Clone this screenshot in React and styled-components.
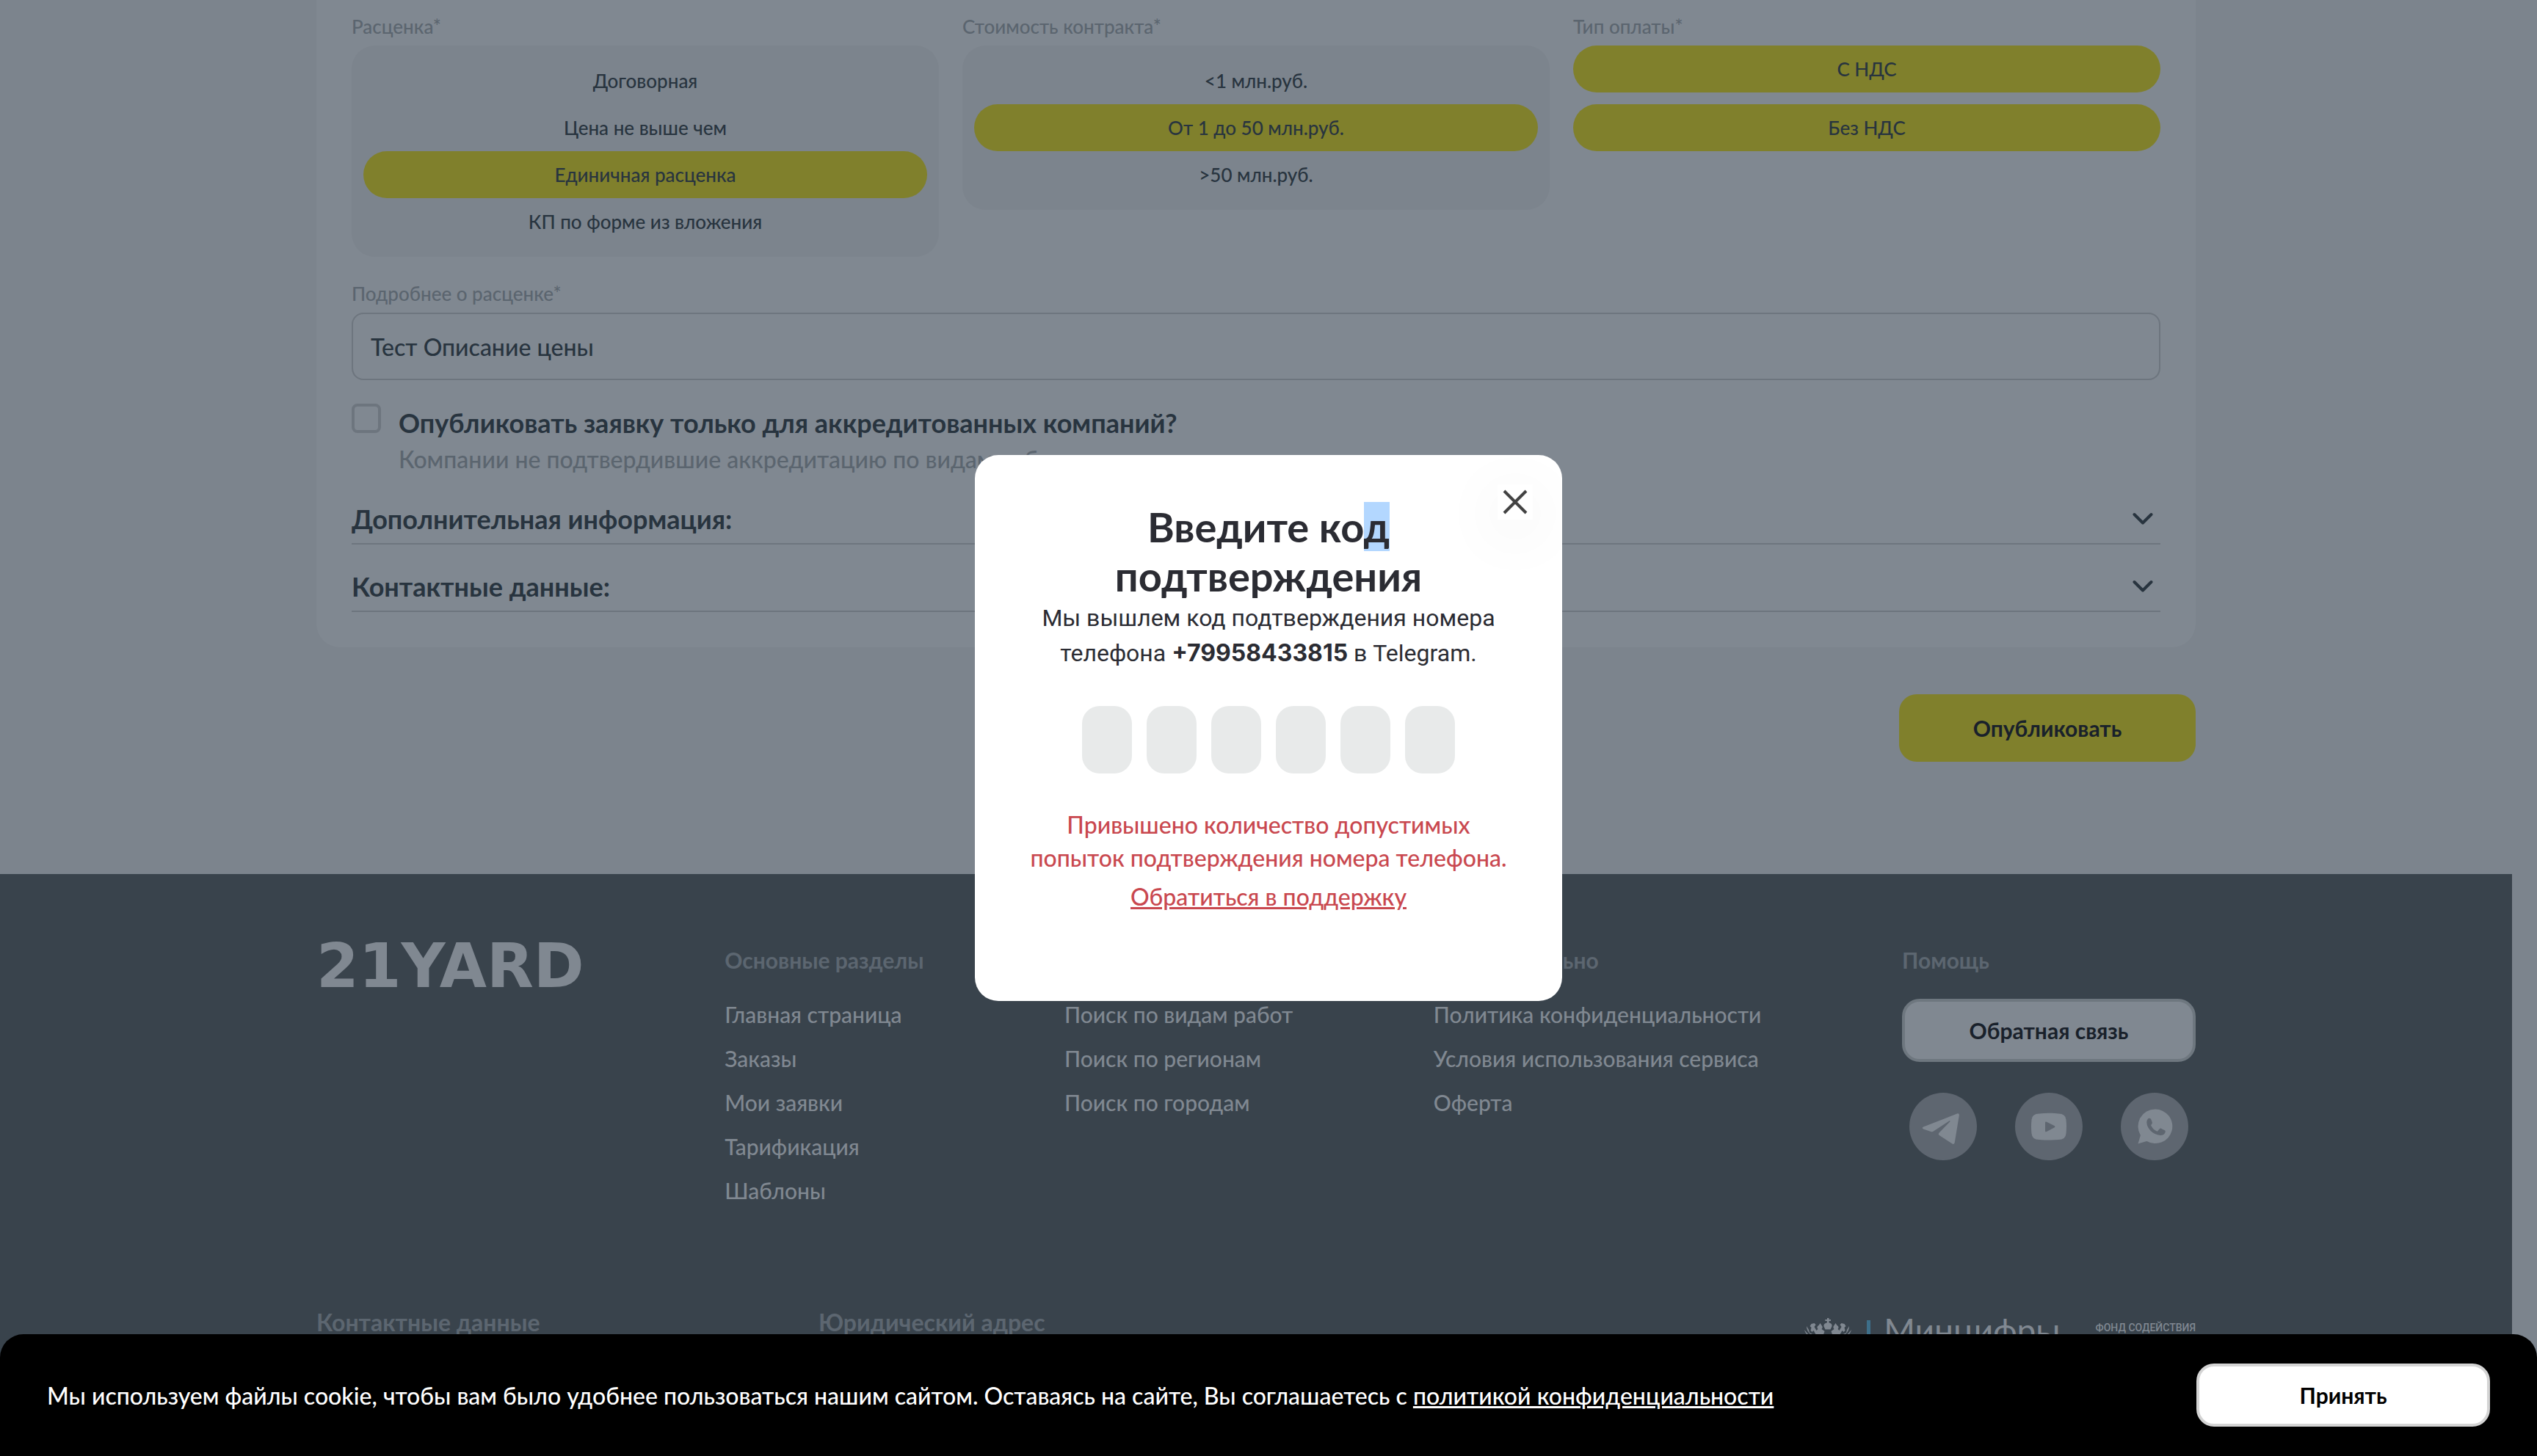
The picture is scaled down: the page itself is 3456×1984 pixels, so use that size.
import React, { useState } from 'react';
import styled, { createGlobalStyle } from 'styled-components';

const color = {
  page: '#7c848d',
  card: '#808891',
  accent: '#80802c',
  text: '#28343f',
  strong: '#19212b',
  label: '#5b656f',
  line: '#6d757e',
  footer: '#39434c',
  footerHead: '#5c6670',
  light: '#808891',
};

const GlobalStyle = createGlobalStyle`
  *, *::before, *::after { box-sizing: border-box; }
  body {
    margin: 0;
    overflow: hidden;
    background: ${color.page};
    font-family: Lato, "Noto Sans", sans-serif;
    font-size: 32px;
    color: ${color.text};
  }
  button, input { font-family: inherit; margin: 0; }
  h2, h3, p, ul { margin: 0; padding: 0; }
`;

const Page = styled.div`
  height: 100vh;
  overflow: hidden;
  padding-right: 34px;
  background: ${color.page};
`;

const Container = styled.div`
  width: 100%;
  max-width: 2560px;
  margin: 0 auto;
`;

const FormCard = styled.section`
  display: flex;
  flex-direction: column;
  gap: 32px;
  padding: 18px 48px 48px;
  background: ${color.card};
  border-radius: 0 0 32px 32px;
`;

const Columns = styled.div`
  display: grid;
  grid-template-columns: repeat(3, 1fr);
  gap: 32px;
  align-items: start;
`;

const Field = styled.div`
  display: flex;
  flex-direction: column;
  gap: 8px;
`;

const FieldLabel = styled.label`
  font-size: 26px;
  font-weight: 500;
  line-height: 36px;
  color: ${color.label};
`;

const OptionBox = styled.div`
  display: flex;
  flex-direction: column;
  gap: ${(p) => (p.$separate ? '16px' : '0')};
  padding: ${(p) => (p.$separate ? '0' : '16px')};
  border-radius: 32px;
  background: ${(p) => (p.$separate ? 'transparent' : color.page)};
`;

const Option = styled.button`
  height: 64px;
  padding: 0 32px;
  border: 0;
  border-radius: 32px;
  background: ${(p) => (p.$active ? color.accent : 'transparent')};
  color: ${color.text};
  font-size: 26px;
  font-weight: 500;
  cursor: pointer;
`;

const TextInput = styled.input`
  width: 100%;
  height: 92px;
  padding: 0 24px;
  border: 2px solid ${color.line};
  border-radius: 16px;
  background: transparent;
  color: ${color.text};
  font-size: 32px;
  font-weight: 500;
  outline: none;
`;

const CheckRow = styled.div`
  display: flex;
  gap: 24px;
`;

const CheckBox = styled.input`
  appearance: none;
  flex: none;
  width: 40px;
  height: 40px;
  border: 4px solid ${color.line};
  border-radius: 8px;
`;

const CheckText = styled.label`
  display: flex;
  flex-direction: column;
`;

const CheckTitle = styled.span`
  font-size: 36px;
  font-weight: 700;
  line-height: 52px;
`;

const CheckHint = styled.span`
  font-weight: 500;
  line-height: 48px;
  color: ${color.label};
`;

const Options = styled.div`
  display: flex;
  flex-direction: column;
`;

const AccordionHeader = styled.button`
  display: flex;
  align-items: center;
  justify-content: space-between;
  width: 100%;
  padding: 32px 10px 8px 0;
  border: 0;
  border-bottom: 2px solid ${color.line};
  background: transparent;
  color: ${color.text};
  font-size: 36px;
  font-weight: 700;
  line-height: 50px;
  cursor: pointer;
`;

const Actions = styled.div`
  display: flex;
  justify-content: flex-end;
  padding: 64px 0 153px;
`;

const PublishButton = styled.button`
  width: 404px;
  height: 92px;
  border: 0;
  border-radius: 24px;
  background: ${color.accent};
  color: ${color.strong};
  font-size: 30px;
  font-weight: 700;
`;

const Footer = styled.footer`
  padding: 96px 0 240px;
  background: ${color.footer};
`;

const FooterTop = styled.div`
  display: flex;
  justify-content: space-between;
  align-items: flex-start;
`;

const Logo = styled.a`
  font-family: "DejaVu Sans", sans-serif;
  font-size: 83px;
  font-weight: 700;
  line-height: 60px;
  color: ${color.light};
  text-decoration: none;
`;

const FooterColumn = styled.div`
  display: flex;
  flex-direction: column;
  gap: 32px;
`;

const FooterTitle = styled.h3`
  font-size: ${(p) => (p.$large ? '32px' : '30px')};
  font-weight: 700;
  line-height: 42px;
  color: ${color.footerHead};
`;

const LinkList = styled.ul`
  display: flex;
  flex-direction: column;
  gap: 18px;
  list-style: none;
`;

const FooterLink = styled.a`
  display: block;
  font-size: 30px;
  font-weight: 500;
  line-height: 42px;
  color: ${color.light};
  text-decoration: none;
`;

const OutlineButton = styled.button`
  width: 400px;
  height: 86px;
  flex: none;
  border: 4px solid ${(p) => (p.$bright ? '#d4d4d4' : '#6e777f')};
  border-radius: 24px;
  background: ${(p) => (p.$bright ? '#ffffff' : color.light)};
  color: ${(p) => (p.$bright ? '#000000' : color.strong)};
  font-size: 30px;
  font-weight: 700;
`;

const Socials = styled.div`
  display: flex;
  justify-content: space-between;
  padding: 10px 10px 0;
`;

const SocialLink = styled.a`
  display: block;
  height: 92px;
`;

const FooterBottom = styled.div`
  display: flex;
  align-items: flex-start;
  padding-top: 138px;
`;

const BottomCell = styled.div`
  width: 684px;
`;

const Partners = styled.div`
  display: flex;
  align-items: flex-start;
  gap: 48px;
  margin-left: auto;
`;

const Ministry = styled.div`
  display: flex;
  align-items: flex-start;
  gap: 16px;
  color: ${color.light};
  font-size: 46px;
  line-height: 64px;
`;

const EmblemBox = styled.span`
  display: flex;
  padding-top: 15px;
`;

const Fund = styled.span`
  font-family: Roboto, sans-serif;
  font-size: 14px;
  font-weight: 500;
  line-height: 56px;
  color: ${color.light};
`;

const Overlay = styled.div`
  position: fixed;
  inset: 0;
  z-index: 10;
  display: flex;
  align-items: center;
  justify-content: center;
`;

const Dialog = styled.div`
  position: relative;
  width: 800px;
  padding: 64px 64px 119px;
  border-radius: 32px;
  overflow: hidden;
  background: #ffffff;
  color: #2b2c33;
  text-align: center;
`;

const CloseButton = styled.button`
  position: absolute;
  top: 40px;
  right: 40px;
  width: 48px;
  height: 48px;
  padding: 0;
  border: 0;
  background: #ffffff;
  box-shadow: 0 16px 80px 16px rgba(0, 0, 0, 0.03);
  cursor: pointer;
`;

const DialogTitle = styled.h2`
  font-size: 56px;
  font-weight: 700;
  line-height: 67px;
`;

const Selected = styled.span`
  background: #b3d7ff;
`;

const DialogText = styled.p`
  font-family: Roboto, sans-serif;
  font-size: 32px;
  line-height: 48px;
`;

const Phone = styled.b`
  font-family: Inter, sans-serif;
  font-weight: 700;
  line-height: 1;
`;

const CodeRow = styled.div`
  display: flex;
  justify-content: center;
  gap: 20px;
  margin: 48px 0 47px;
`;

const CodeInput = styled.input`
  width: 68px;
  height: 92px;
  padding: 0;
  border: 0;
  border-radius: 24px;
  background: #e8eaea;
  text-align: center;
  font-size: 36px;
  outline: none;
`;

const ErrorText = styled.p`
  margin-bottom: 8px;
  color: #c9484f;
  font-weight: 500;
  line-height: 45px;
`;

const SupportLink = styled.a`
  color: #c9484f;
  font-weight: 500;
  line-height: 46px;
  display: block;
  text-decoration: underline;
`;

const CookieBar = styled.div`
  position: fixed;
  left: 0;
  right: 0;
  bottom: 0;
  z-index: 20;
  display: flex;
  align-items: center;
  justify-content: space-between;
  padding: 40px 64px;
  border-radius: 32px 32px 0 0;
  background: #000000;
  color: #ffffff;
  font-weight: 500;
`;

const PolicyLink = styled.a`
  color: inherit;
`;

const Chevron = () => (
  <svg width="28" height="18" viewBox="0 0 28 18" fill="none" aria-hidden="true">
    <path d="M2.5 3 14 14.5 25.5 3" stroke={color.text} strokeWidth="4" strokeLinecap="round" strokeLinejoin="round" />
  </svg>
);

const TelegramIcon = () => (
  <svg width="92" height="92" viewBox="0 0 94 94" aria-hidden="true">
    <circle cx="47" cy="47" r="47" fill="#5e6670" />
    <path
      fill={color.light}
      d="M66.5 29.2 19.5 47.6c-1.800.7-1.800 2.300 0 2.900l10.500 3.600c1.600.5 2.600.3 3.900-.6l21.500-14.200c1.200-.8 1.800.2 1 1L41.500 55.600c-1.300 1.300-1.200 2.500.2 3.600l17.600 11.600c1.900 1.200 3.300.6 3.800-1.600l6.200-37.600c.3-2.100-.9-3.100-2.800-2.400Z"
    />
  </svg>
);

const YoutubeIcon = () => (
  <svg width="92" height="92" viewBox="0 0 92 92" aria-hidden="true">
    <circle cx="46" cy="46" r="46" fill="#5e6670" />
    <path
      fill={color.light}
      fillRule="evenodd"
      d="M33 28.500Q46 27 59 28.500Q69 28.500 69.500 37Q70.500 46 69.500 55.500Q69 64 59 64Q46 65 33 64Q23 64 22.500 55.500Q21.500 46 22.500 37Q23 28.500 33 28.500ZM41 41v11q0 2 2 1l10.500-5.500q1.800-1.200 0-2.400L43 39.800q-2-.8-2 1.200Z"
    />
  </svg>
);

const WhatsappIcon = () => (
  <svg width="92" height="92" viewBox="0 0 92 92" aria-hidden="true">
    <circle cx="46" cy="46" r="46" fill="#5e6670" />
    <path fill={color.light} d="M47 22.500a23.300 23.300 0 1 1-11.600 43.500L23.500 69.500l3.400-11.600A23.300 23.300 0 0 1 47 22.500Z" />
    <path
      fill="#5e6670"
      d="M38.200 34.800c1.700-.5 2.600.2 3.200 1.800l1.300 3.500c.5 1.400-.1 2.300-1.700 4.200 1.900 4.200 4.700 6.800 8.700 8.400l2.900-3.300c.9-1 1.600-1.100 2.800-.5l4.100 2.100c1.200.6 1.500 1.300 1.200 2.600-.8 3.200-3.600 4.700-7 4.500C43.600 57 35.500 48.500 35.300 40.500c0-2.700 1.100-5 2.900-5.700Z"
    />
  </svg>
);

const Emblem = () => (
  <svg width="92" height="72" viewBox="0 0 92 72" fill={color.light} aria-hidden="true">
    <path d="M31 0h2.500v2H36v2h-2.500v2.500c3.500.3 5 3 3.500 6l-1.500 3h-7L27 12.500c-1.500-3 .3-5.700 3.800-6V4h-2.500V2H31Z" />
    <path d="M19.500 10 21.500 7l2 3c1.500 1.500 1.500 3.500 0 5l4 3-2 6h-9l-4-7-2 2-2-2 1-4-2-2 2-3 4-1 2 2-2 3 3 5 2-2c-1.500-1.500-1.500-3.500.7-5Z" />
    <path d="M44.500 10 42.500 7l-2 3c-1.500 1.500-1.500 3.500 0 5l-4 3 2 6h9l4-7 2 2 2-2-1-4 2-2-2-3-4-1-2 2 2 3-3 5-2-2c1.500-1.500 1.500-3.500-.7-5Z" />
    <path d="M3 11c0 5 2 8 5 11l12 4 12-3 12 3 12-4c3-3 5-6 5-11l-3 5-1 4-4 2-21 6-21-6-4-2-1-4Z" />
    <path d="M0 16c1 4 3 7 7 9l6 19 19 26 19-26 6-19c4-2 6-5 7-9l-5 6-27 6-27-6Z" />
    <path fill="#3d6f8a" d="M85 3h5v60h-5Z" />
  </svg>
);

const CloseIcon = () => (
  <svg width="48" height="48" viewBox="0 0 48 48" aria-hidden="true">
    <path d="m9 9 30 30M39 9 9 39" stroke="#434343" strokeWidth="4" fill="none" />
  </svg>
);

const priceOptions = ['Договорная', 'Цена не выше чем', 'Единичная расценка', 'КП по форме из вложения'];
const costOptions = ['<1 млн.руб.', 'От 1 до 50 млн.руб.', '>50 млн.руб.'];
const taxOptions = ['С НДС', 'Без НДС'];

const footerSections = [
  { title: 'Основные разделы', links: ['Главная страница', 'Заказы', 'Мои заявки', 'Тарификация', 'Шаблоны'] },
  { title: 'Поиск', links: ['Поиск по видам работ', 'Поиск по регионам', 'Поиск по городам'] },
  { title: 'Дополнительно', links: ['Политика конфиденциальности', 'Условия использования сервиса', 'Оферта'] },
];

function OptionField({ label, options, active, onPick, separate }) {
  return (
    <Field role="group" aria-label={label}>
      <FieldLabel as="span">{label}</FieldLabel>
      <OptionBox $separate={separate}>
        {options.map((name) => (
          <Option key={name} type="button" $active={active.includes(name)} onClick={() => onPick(name)}>
            {name}
          </Option>
        ))}
      </OptionBox>
    </Field>
  );
}

export default function App() {
  const [price, setPrice] = useState('Единичная расценка');
  const [cost, setCost] = useState('От 1 до 50 млн.руб.');
  const [tax, setTax] = useState(taxOptions);
  const toggleTax = (name) =>
    setTax((list) => (list.includes(name) ? list.filter((item) => item !== name) : [...list, name]));

  return (
    <>
      <GlobalStyle />
      <Page>
        <Container as="main">
          <FormCard>
            <Columns>
              <OptionField label="Расценка*" options={priceOptions} active={[price]} onPick={setPrice} />
              <OptionField label="Стоимость контракта*" options={costOptions} active={[cost]} onPick={setCost} />
              <OptionField label="Тип оплаты*" options={taxOptions} active={tax} onPick={toggleTax} separate />
            </Columns>
            <Field>
              <FieldLabel htmlFor="price-details">Подробнее о расценке*</FieldLabel>
              <TextInput id="price-details" type="text" defaultValue="Тест Описание цены" />
            </Field>
            <Options>
              <CheckRow>
                <CheckBox id="accredited" type="checkbox" />
                <CheckText htmlFor="accredited">
                  <CheckTitle>Опубликовать заявку только для аккредитованных компаний?</CheckTitle>
                  <CheckHint>Компании не подтвердившие аккредитацию по видам работ не увидят заявку</CheckHint>
                </CheckText>
              </CheckRow>
              <AccordionHeader type="button">
                Дополнительная информация:
                <Chevron />
              </AccordionHeader>
              <AccordionHeader type="button">
                Контактные данные:
                <Chevron />
              </AccordionHeader>
            </Options>
          </FormCard>
          <Actions>
            <PublishButton type="button">Опубликовать</PublishButton>
          </Actions>
        </Container>
        <Footer>
          <Container>
            <FooterTop>
              <Logo href="#">21YARD</Logo>
              {footerSections.map((section) => (
                <FooterColumn key={section.title}>
                  <FooterTitle>{section.title}</FooterTitle>
                  <LinkList>
                    {section.links.map((link) => (
                      <li key={link}>
                        <FooterLink href="#">{link}</FooterLink>
                      </li>
                    ))}
                  </LinkList>
                </FooterColumn>
              ))}
              <FooterColumn>
                <FooterTitle>Помощь</FooterTitle>
                <OutlineButton type="button">Обратная связь</OutlineButton>
                <Socials>
                  <SocialLink href="#" aria-label="Telegram"><TelegramIcon /></SocialLink>
                  <SocialLink href="#" aria-label="YouTube"><YoutubeIcon /></SocialLink>
                  <SocialLink href="#" aria-label="WhatsApp"><WhatsappIcon /></SocialLink>
                </Socials>
              </FooterColumn>
            </FooterTop>
            <FooterBottom>
              <BottomCell>
                <FooterTitle $large>Контактные данные</FooterTitle>
              </BottomCell>
              <BottomCell>
                <FooterTitle $large>Юридический адрес</FooterTitle>
              </BottomCell>
              <Partners>
                <Ministry>
                  <EmblemBox><Emblem /></EmblemBox>
                  Минцифры
                </Ministry>
                <Fund>ФОНД СОДЕЙСТВИЯ</Fund>
              </Partners>
            </FooterBottom>
          </Container>
        </Footer>
      </Page>

      <Overlay>
        <Dialog role="dialog" aria-modal="true" aria-labelledby="dialog-title">
          <CloseButton type="button" aria-label="Закрыть"><CloseIcon /></CloseButton>
          <DialogTitle id="dialog-title">
            Введите ко<Selected>д</Selected> подтверждения
          </DialogTitle>
          <DialogText>
            Мы вышлем код подтверждения номера телефона <Phone>+79958433815</Phone> в Telegram.
          </DialogText>
          <CodeRow>
            {[1, 2, 3, 4, 5, 6].map((n) => (
              <CodeInput key={n} type="text" inputMode="numeric" maxLength={1} aria-label={`Цифра ${n}`} />
            ))}
          </CodeRow>
          <ErrorText>Привышено количество допустимых попыток подтверждения номера телефона.</ErrorText>
          <SupportLink href="#">Обратиться в поддержку</SupportLink>
        </Dialog>
      </Overlay>

      <CookieBar>
        <p>
          Мы используем файлы cookie, чтобы вам было удобнее пользоваться нашим сайтом. Оставаясь на сайте, Вы
          соглашаетесь с <PolicyLink href="#">политикой конфиденциальности</PolicyLink>
        </p>
        <OutlineButton type="button" $bright>Принять</OutlineButton>
      </CookieBar>
    </>
  );
}
